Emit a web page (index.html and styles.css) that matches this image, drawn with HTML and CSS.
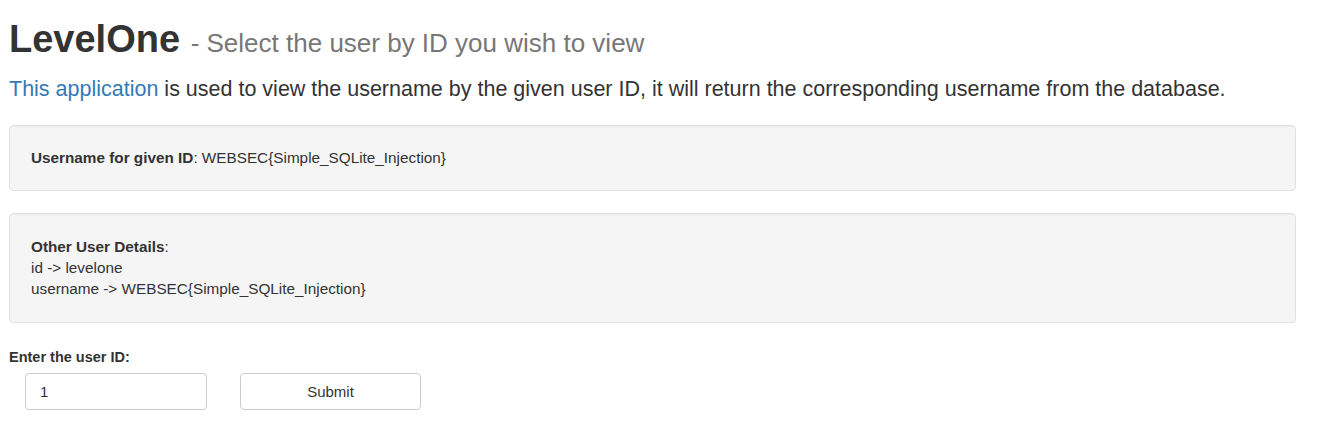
FILE: index.html
```html
<!DOCTYPE html>
<html>
<head>
<meta charset="utf-8">
<link rel="stylesheet" href="styles.css">
</head>
<body>
<div class="container">
  <h1 class="title">LevelOne <small>- Select the user by ID you wish to view</small></h1>
  <p class="lead"><a href="#">This application</a> is used to view the username by the given user ID, it will return the corresponding username from the database.</p>
  <div class="well well-single"><b>Username for given ID</b>: WEBSEC{Simple_SQLite_Injection}</div>
  <div class="well well-multi"><b>Other User Details</b>:<br>id -&gt; levelone<br>username -&gt; WEBSEC{Simple_SQLite_Injection}</div>
  <form class="form">
    <label class="label">Enter the user ID:</label>
    <div class="row">
      <input class="input" type="text" value="1">
      <button class="btn" type="button">Submit</button>
    </div>
  </form>
</div>
</body>
</html>
```

FILE: styles.css
```css
html, body {
  margin: 0;
  padding: 0;
  background: #fff;
}
body {
  font-family: "Liberation Sans", Arial, sans-serif;
  font-size: 14px;
  line-height: 20px;
  color: #333;
}
.container {
  padding: 19px 22px 0 9px;
}
.title {
  margin: 0;
  font-size: 38px;
  line-height: 40px;
  font-weight: 700;
  color: #333;
}
.title small {
  font-size: 26px;
  font-weight: 400;
  color: #777;
}
.lead {
  margin: 11px 0 0;
  font-size: 21.5px;
  line-height: 30px;
  font-weight: 300;
  color: #333;
}
.lead a {
  color: #337ab7;
  text-decoration: none;
}
.well {
  background: #f5f5f5;
  border: 1px solid #e3e3e3;
  border-radius: 4px;
  box-shadow: inset 0 1px 1px rgba(0,0,0,0.05);
  padding: 0 21px;
  font-size: 15.3px;
}
.well-single {
  margin-top: 21px;
  height: 66px;
  padding-top: 22px;
  padding-bottom: 22px;
  box-sizing: border-box;
  line-height: 20px;
}
.well-multi {
  margin-top: 22px;
  padding-top: 22px;
  padding-bottom: 23px;
  line-height: 21px;
}
.form {
  margin-top: 24px;
}
.label {
  display: block;
  font-weight: 700;
  font-size: 14.5px;
  line-height: 20px;
}
.row {
  display: flex;
  gap: 33px;
  margin-top: 6px;
  padding-left: 16px;
}
.input, .btn {
  box-sizing: border-box;
  width: 182px;
  height: 37px;
  border: 1px solid #ccc;
  border-radius: 4px;
  background: #fff;
  font-family: "Liberation Sans", Arial, sans-serif;
  font-size: 15px;
  color: #333;
  margin: 0;
}
.input {
  padding: 0 14px;
}
.btn {
  width: 181px;
}
```
